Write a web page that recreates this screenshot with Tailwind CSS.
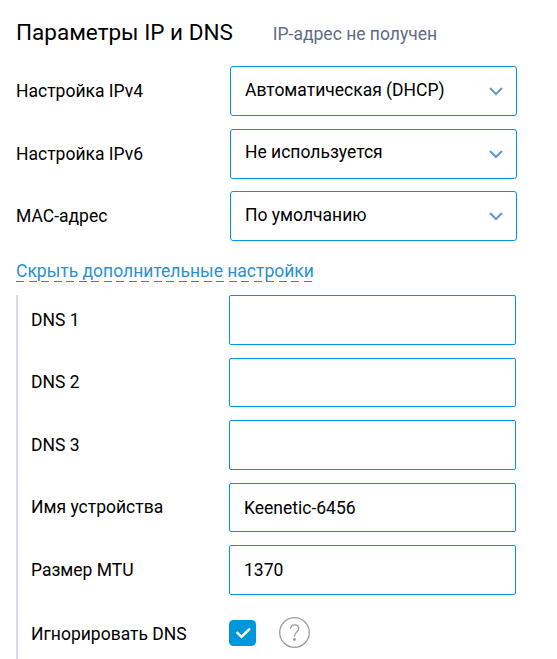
<!DOCTYPE html>
<html lang="ru">
<head>
<meta charset="utf-8">
<title>Параметры IP и DNS</title>
<script src="https://cdn.jsdelivr.net/npm/@tailwindcss/browser@4"></script>
</head>
<body class="h-[659px] w-[557px] overflow-hidden bg-white pl-4 font-[Roboto,sans-serif] text-[17.5px] leading-[22px] text-black">
<header class="flex h-[66px] items-baseline gap-10 pt-[17px]">
  <h1 class="text-[22.5px] leading-[30px]">Параметры IP и DNS</h1>
  <span class="text-[#5f6b88]">IP-адрес не получен</span>
</header>
<div class="flex h-[63px] items-start">
  <label class="w-[214px] pt-[14px]">Настройка IPv4</label>
  <div class="flex h-[50px] w-[287px] items-start justify-between rounded-[3px] border border-[#0096dc] pt-3 pr-[13px] pl-[14px]"><span>Автоматическая (DHCP)</span><svg class="mt-[8px] h-[9px] w-[14px]" viewBox="0 0 14 9" fill="none" stroke="#6297ce" stroke-width="2"><path d="M1 1l6 6 6-6"/></svg></div>
</div>
<div class="flex h-[62px] items-start">
  <label class="w-[214px] pt-[14px]">Настройка IPv6</label>
  <div class="flex h-[50px] w-[287px] items-start justify-between rounded-[3px] border border-[#0096dc] pt-[11px] pr-[13px] pl-[14px]"><span>Не используется</span><svg class="mt-[9px] h-[9px] w-[14px]" viewBox="0 0 14 9" fill="none" stroke="#6297ce" stroke-width="2"><path d="M1 1l6 6 6-6"/></svg></div>
</div>
<div class="flex h-[69px] items-start">
  <label class="w-[214px] pt-[14px]">MAC-адрес</label>
  <div class="flex h-[50px] w-[287px] items-start justify-between rounded-[3px] border border-[#0096dc] pt-3 pr-[13px] pl-[14px]"><span>По умолчанию</span><svg class="mt-[8px] h-[9px] w-[14px]" viewBox="0 0 14 9" fill="none" stroke="#6297ce" stroke-width="2"><path d="M1 1l6 6 6-6"/></svg></div>
</div>
<div class="h-[35px]">
  <a class="block h-[22px] w-[298px] whitespace-nowrap bg-[repeating-linear-gradient(90deg,#0096dc_0_8px,transparent_8px_12.5px)] bg-[length:100%_1px] bg-bottom bg-no-repeat leading-[22px] text-[#2a8fd4]">Скрыть дополнительные настройки</a>
</div>
<section class="h-[364px] border-l-2 border-[#d8dbe6] pl-[13px]">
  <div class="flex h-[63px] items-start">
    <label class="w-[198px] pt-[14px]">DNS 1</label>
    <div class="h-[50px] w-[287px] rounded-[2px] border border-[#0096dc]"></div>
  </div>
  <div class="flex h-[62px] items-start">
    <label class="w-[198px] pt-[13px]">DNS 2</label>
    <div class="h-[49px] w-[287px] rounded-[2px] border border-[#0096dc]"></div>
  </div>
  <div class="flex h-[63px] items-start">
    <label class="w-[198px] pt-[14px]">DNS 3</label>
    <div class="h-[50px] w-[287px] rounded-[2px] border border-[#0096dc]"></div>
  </div>
  <div class="flex h-[62px] items-start">
    <label class="w-[198px] pt-[13px]">Имя устройства</label>
    <div class="h-[49px] w-[287px] rounded-[2px] border border-[#0096dc] pt-[13px] pl-[14px]">Keenetic-6456</div>
  </div>
  <div class="flex h-[72px] items-start">
    <label class="w-[198px] pt-[14px]">Размер MTU</label>
    <div class="h-[50px] w-[287px] rounded-[2px] border border-[#0096dc] pt-[13px] pl-[14px]">1370</div>
  </div>
  <div class="flex items-start">
    <label class="w-[198px] pt-[6px]">Игнорировать DNS</label>
    <svg class="mt-[3px] h-[26px] w-[27px]" viewBox="0 0 27 26"><rect width="27" height="26" rx="4.5" fill="#0096dc"/><path d="M7.6 12.2l4.9 4.5 8.4-8" fill="none" stroke="#fff" stroke-width="2.5"/></svg>
    <svg class="ml-[23px] h-[31px] w-[31px]" viewBox="0 0 31 31" fill="none" stroke="#999" stroke-width="1.25"><circle cx="15.5" cy="15.5" r="14.8"/><path d="M11.6 11.8c0-2.4 1.6-4 4-4s4 1.5 4 3.8c0 1.8-1 2.7-2.2 3.8-1.3 1.2-1.9 2-1.9 4.2"/><circle cx="15.5" cy="22.5" r="1.4" fill="#999" stroke="none"/></svg>
  </div>
</section>
</body>
</html>
